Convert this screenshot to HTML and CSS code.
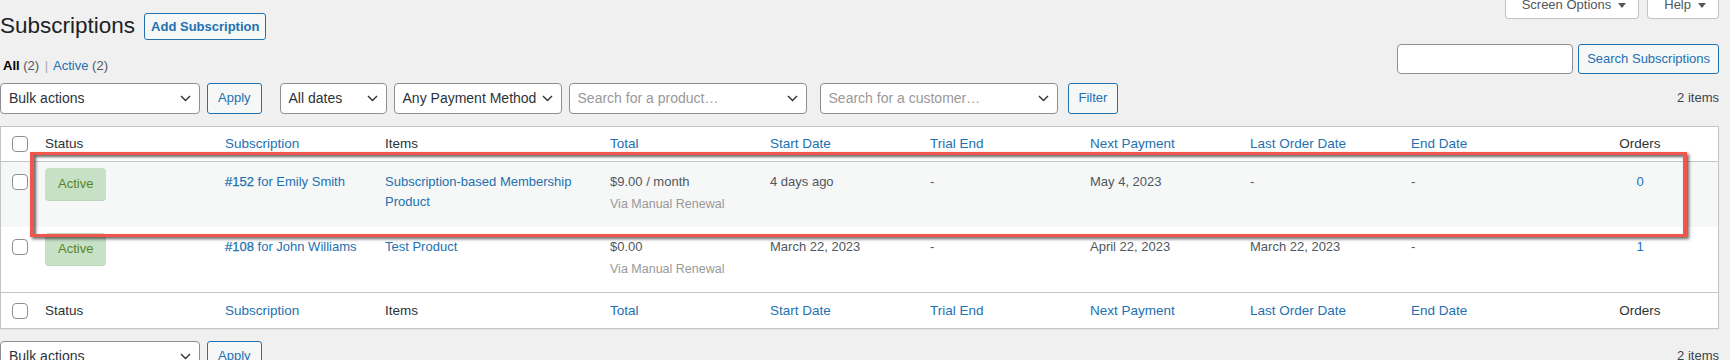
FILE: index.html
```html
<html>
<head>
<title>Subscriptions</title>
<link rel="stylesheet" href="styles.css">
</head>
<body>
<div class="wrap">
<div class="page-head">
<div class="title-line">
<h1>Subscriptions</h1>
<a class="title-action" href="#">Add Subscription</a>
</div>
<div class="screen-links">
<span class="screen-tab">Screen Options<i class="caret"></i></span>
<span class="screen-tab">Help<i class="caret"></i></span>
</div>
</div>

<div class="list-top">
<div class="subsubsub">
<b class="current">All</b> <span class="count">(2)</span> <span class="sep">|</span> <a href="#">Active</a> <span class="count">(2)</span>
</div>
<div class="search-box">
<div class="search-input"></div>
<a class="button button-tall" href="#">Search Subscriptions</a>
</div>
</div>

<div class="tablenav">
<div class="select w-bulk">Bulk actions<svg width="11" height="7" viewBox="0 0 11 7"><path d="M1 1l4.5 4.5L10 1" fill="none" stroke="#2c3338" stroke-width="1.4"/></svg></div>
<a class="button ml-7" href="#">Apply</a>
<div class="select w-dates ml-18">All dates<svg width="11" height="7" viewBox="0 0 11 7"><path d="M1 1l4.5 4.5L10 1" fill="none" stroke="#2c3338" stroke-width="1.4"/></svg></div>
<div class="select w-pay ml-7">Any Payment Method<svg width="11" height="7" viewBox="0 0 11 7"><path d="M1 1l4.5 4.5L10 1" fill="none" stroke="#2c3338" stroke-width="1.4"/></svg></div>
<div class="select w-search ml-7"><span class="placeholder">Search for a product…</span><svg width="11" height="7" viewBox="0 0 11 7"><path d="M1 1l4.5 4.5L10 1" fill="none" stroke="#2c3338" stroke-width="1.4"/></svg></div>
<div class="select w-search ml-13"><span class="placeholder">Search for a customer…</span><svg width="11" height="7" viewBox="0 0 11 7"><path d="M1 1l4.5 4.5L10 1" fill="none" stroke="#2c3338" stroke-width="1.4"/></svg></div>
<a class="button ml-10" href="#">Filter</a>
<span class="displaying-num">2 items</span>
</div>

<div class="table-wrap">
<table class="list-table">
<thead>
<tr>
<th class="col-check"><span class="cb"></span></th>
<th class="col-status">Status</th>
<th class="col-sub"><a href="#">Subscription</a></th>
<th class="col-items">Items</th>
<th class="col-std"><a href="#">Total</a></th>
<th class="col-std"><a href="#">Start Date</a></th>
<th class="col-std"><a href="#">Trial End</a></th>
<th class="col-std"><a href="#">Next Payment</a></th>
<th class="col-wide"><a href="#">Last Order Date</a></th>
<th class="col-wide"><a href="#">End Date</a></th>
<th class="col-orders">Orders</th>
</tr>
</thead>
<tbody>
<tr class="alt">
<td class="check"><span class="cb"></span></td>
<td><mark class="status-active">Active</mark></td>
<td><a class="sub-link" href="#"><span class="sub-id">#152</span> for Emily Smith</a></td>
<td><a href="#">Subscription-based Membership Product</a></td>
<td>$9.00 / month<small class="meta">Via Manual Renewal</small></td>
<td>4 days ago</td>
<td>-</td>
<td>May 4, 2023</td>
<td>-</td>
<td>-</td>
<td class="orders"><a href="#">0</a></td>
</tr>
<tr>
<td class="check"><span class="cb"></span></td>
<td><mark class="status-active">Active</mark></td>
<td><a class="sub-link" href="#"><span class="sub-id">#108</span> for John Williams</a></td>
<td><a href="#">Test Product</a></td>
<td>$0.00<small class="meta">Via Manual Renewal</small></td>
<td>March 22, 2023</td>
<td>-</td>
<td>April 22, 2023</td>
<td>March 22, 2023</td>
<td>-</td>
<td class="orders"><a href="#">1</a></td>
</tr>
</tbody>
<tfoot>
<tr>
<th class="col-check"><span class="cb"></span></th>
<th>Status</th>
<th><a href="#">Subscription</a></th>
<th>Items</th>
<th><a href="#">Total</a></th>
<th><a href="#">Start Date</a></th>
<th><a href="#">Trial End</a></th>
<th><a href="#">Next Payment</a></th>
<th><a href="#">Last Order Date</a></th>
<th><a href="#">End Date</a></th>
<th class="col-orders">Orders</th>
</tr>
</tfoot>
</table>
<div class="highlight"></div>
</div>

<div class="tablenav tablenav-bottom">
<div class="select w-bulk">Bulk actions<svg width="11" height="7" viewBox="0 0 11 7"><path d="M1 1l4.5 4.5L10 1" fill="none" stroke="#2c3338" stroke-width="1.4"/></svg></div>
<a class="button ml-7" href="#">Apply</a>
<span class="displaying-num">2 items</span>
</div>
</div>
</body>
</html>
```
FILE: styles.css
```css
* {
box-sizing: border-box;
}
body {
margin: 0;
background-color: #f0f0f1;
color: #3c434a;
font-family: "Liberation Sans", Arial, sans-serif;
font-size: 13px;
line-height: 1.4;
overflow: hidden;
}
a {
color: #2271b1;
text-decoration: none;
}
.wrap {
padding: 0 11px 0 0;
}

/* heading */
.page-head {
display: flex; justify-content: space-between; align-items: flex-start;
}
.title-line {
display: flex; align-items: center; gap: 9px;
height: 30px; margin-top: 11px;
}
h1 {
margin: 0; font-size: 22.5px; font-weight: 400; line-height: 30px; color: #1d2327;
}
.title-action {
height: 27px; padding: 0 6px; line-height: 25px;
border: 1px solid #2271b1; border-radius: 3px;
background-color: #f6f7f7; font-weight: 700;
}
.screen-links {
display: flex; gap: 8px;
}
.screen-tab {
display: flex; align-items: flex-start;
height: 19px; padding: 0 12px 0 16px;
background-color: #fff; border: 1px solid #c3c4c7; border-top: 0;
border-radius: 0 0 4px 4px;
color: #50575e; line-height: 10px;
}
.caret {
width: 0; height: 0; margin: 3px 0 0 7px;
border-left: 4px solid transparent; border-right: 4px solid transparent;
border-top: 5px solid #50575e;
}

/* views + search */
.list-top {
display: flex; justify-content: space-between; align-items: flex-start;
margin-top: 3px;
}
.subsubsub {
margin: 13px 0 0 3px; line-height: 18px; color: #646970;
}
.subsubsub .current {
color: #000; font-weight: 700;
}
.subsubsub .count {
color: #50575e;
}
.subsubsub .sep {
padding: 0 2px; color: #a7aaad;
}
.search-box {
display: flex; gap: 5px;
}
.search-input {
width: 176px; height: 30px;
background-color: #fff; border: 1px solid #8c8f94; border-radius: 4px;
}

/* buttons and selects */
.button {
display: inline-flex; align-items: center;
height: 31px; padding: 0 10px;
background-color: #f6f7f7; border: 1px solid #2271b1; border-radius: 3px;
color: #2271b1; white-space: nowrap;
}
.button-tall {
height: 30px; padding: 0 8px;
}
.tablenav {
display: flex; align-items: center; height: 31px; margin-top: 8px;
}
.tablenav-bottom {
margin-top: 12px;
}
.select {
display: flex; align-items: center; justify-content: space-between;
height: 31px; padding: 0 8px;
background-color: #fff; border: 1px solid #8c8f94; border-radius: 4px;
color: #2c3338; font-size: 14px; white-space: nowrap;
}
.select svg {
flex: none;
}
.placeholder {
color: #999;
}
.w-bulk { width: 200px; }
.w-dates { width: 107px; }
.w-pay { width: 168px; }
.w-search { width: 238px; }
.ml-7 { margin-left: 7px; }
.ml-10 { margin-left: 10px; }
.ml-13 { margin-left: 13px; }
.ml-18 { margin-left: 18px; }
.displaying-num {
margin-left: auto; color: #3c434a;
}

/* table */
.table-wrap {
position: relative; margin-top: 12px;
}
.list-table {
width: 100%; table-layout: fixed;
border-collapse: separate; border-spacing: 0;
background-color: #fff; border: 1px solid #c3c4c7;
box-shadow: 0 1px 1px rgba(0,0,0,0.04);
font-size: 13px;
}
.list-table th {
padding: 8px 10px; line-height: 18px;
font-size: 13.5px; font-weight: 400; text-align: left; color: #2c3338;
vertical-align: middle; white-space: nowrap;
}
.list-table thead th {
border-bottom: 1px solid #c3c4c7;
}
.list-table tfoot th {
border-top: 1px solid #c3c4c7; line-height: 19px;
}
.list-table td {
height: 65px; padding: 10px 10px 0;
font-size: 13px; line-height: 19.5px; color: #50575e; vertical-align: top;
}
.list-table tr.alt td {
background-color: #f6f7f7;
}
.list-table th.col-check {
padding: 0 0 0 11px;
}
.list-table td.check {
padding: 12px 0 0 11px;
}
.col-check { width: 34px; }
.col-status { width: 180px; }
.col-sub { width: 160px; }
.col-items { width: 225px; }
.col-std { width: 160px; }
.col-wide { width: 161px; }
.list-table .col-orders, .list-table td.orders {
text-align: center;
}
.sub-id {
-webkit-text-stroke: 0.25px #2271b1;
}
.cb {
display: block; width: 16px; height: 16px;
background-color: #fff; border: 1px solid #8c8f94; border-radius: 4px;
}
.status-active {
display: block; width: fit-content;
height: 33px; margin-top: -4px; padding: 0 13px;
line-height: 32px; border-radius: 4px;
border-bottom: 1px solid rgba(0,0,0,0.05);
background-color: #c6e1c6; color: #5b841b;
}
.meta {
display: block; margin-top: 3px; font-size: 12.5px; color: #999;
}

/* annotation box drawn over the first row */
.highlight {
position: absolute; left: 30px; top: 26px;
width: 1657px; height: 85px;
border-style: solid; border-color: #f0564b; border-width: 3px 4px;
box-shadow: 2px 2px 3px rgba(0,0,0,0.6), inset 2px 2px 3px rgba(0,0,0,0.6);
}
```
